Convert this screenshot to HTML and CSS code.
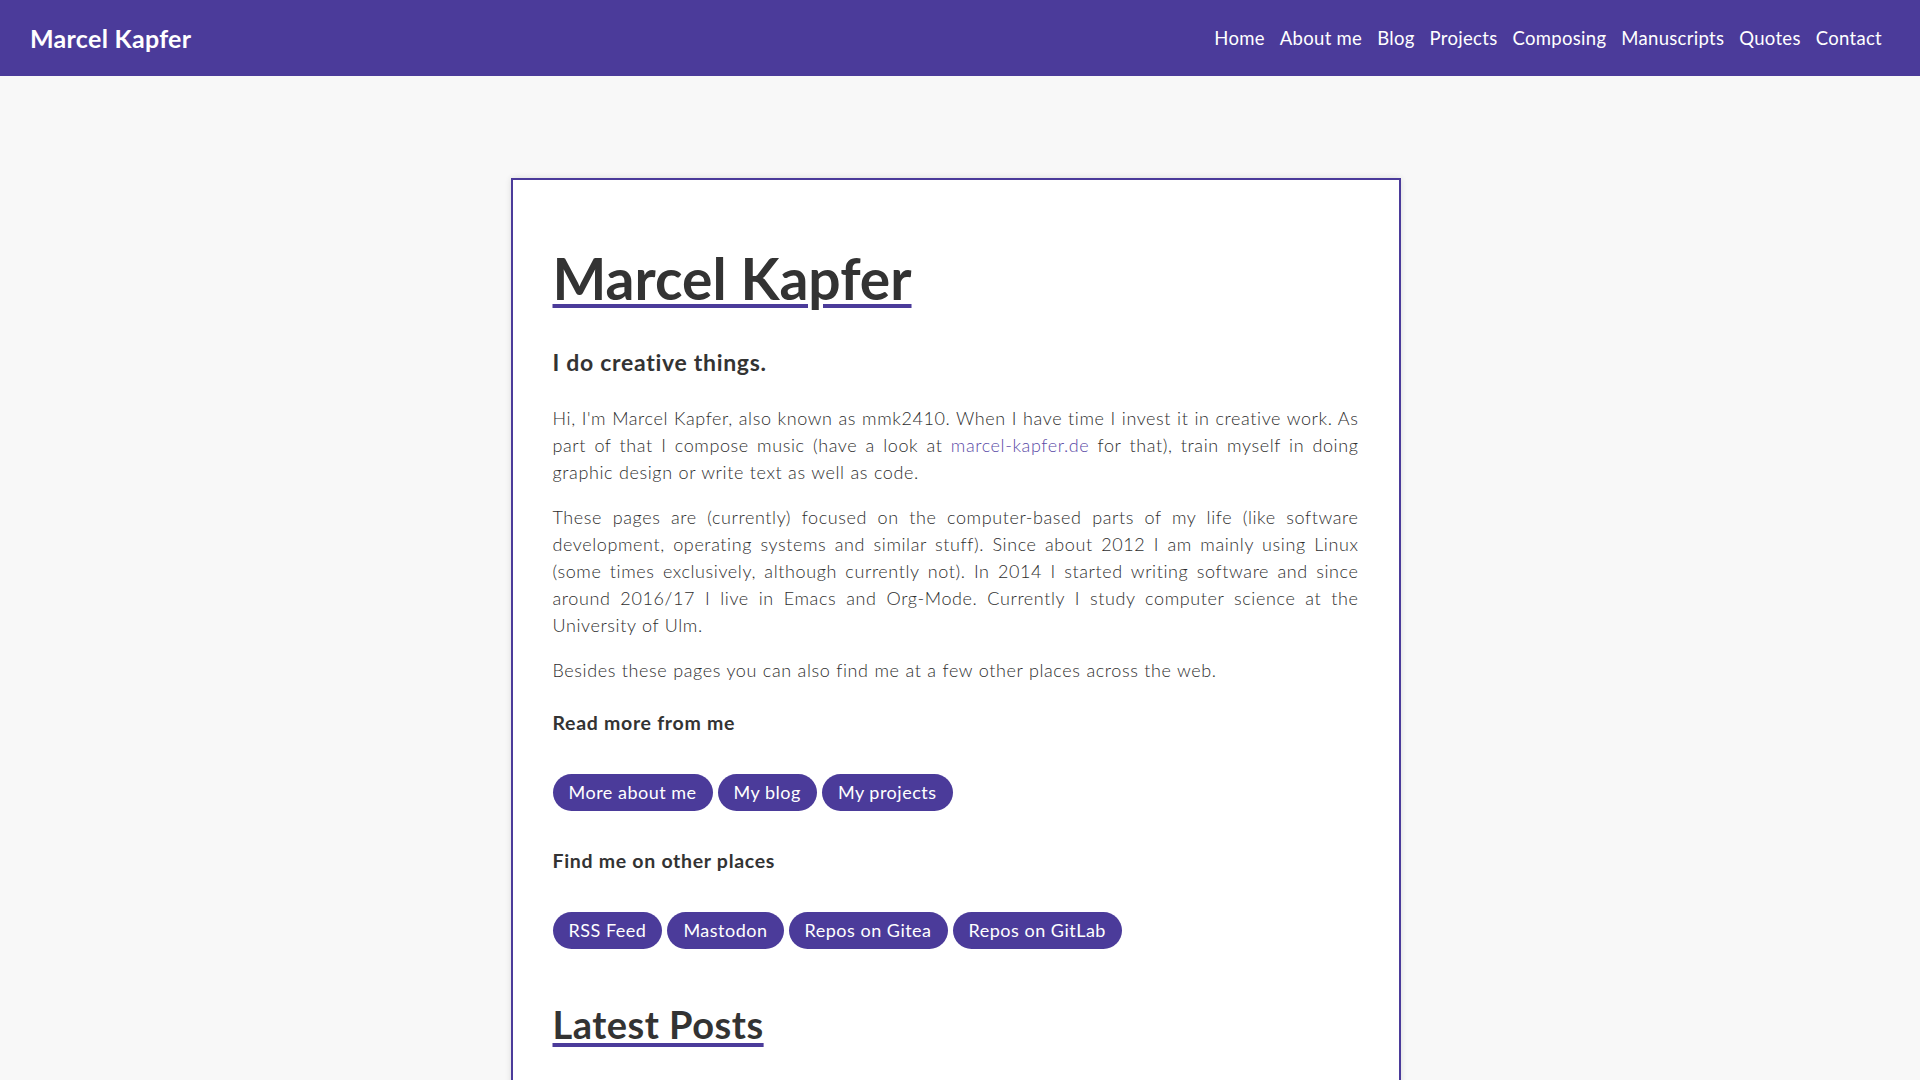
FILE: index.html
```html
<!DOCTYPE html>
<html lang="en">
<head>
<meta charset="utf-8">
<title>Marcel Kapfer</title>
<link rel="stylesheet" href="styles.css">
</head>
<body>
<header class="topbar">
  <a class="brand" href="#">Marcel Kapfer</a>
  <nav class="menu">
    <a href="#">Home</a>
    <a href="#">About me</a>
    <a href="#">Blog</a>
    <a href="#">Projects</a>
    <a href="#">Composing</a>
    <a href="#">Manuscripts</a>
    <a href="#">Quotes</a>
    <a href="#">Contact</a>
  </nav>
</header>
<main class="page">
  <article class="card">
    <h1 class="title"><a href="#">Marcel Kapfer</a></h1>
    <h2 class="subtitle">I do creative things.</h2>
    <p>Hi, I'm Marcel Kapfer, also known as mmk2410. When I have time I invest it in creative work. As part of that I compose music (have a look at <a class="link" href="#">marcel-kapfer.de</a> for that), train myself in doing graphic design or write text as well as code.</p>
    <p>These pages are (currently) focused on the computer-based parts of my life (like software development, operating systems and similar stuff). Since about 2012 I am mainly using Linux (some times exclusively, although currently not). In 2014 I started writing software and since around 2016/17 I live in Emacs and Org-Mode. Currently I study computer science at the University of Ulm.</p>
    <p>Besides these pages you can also find me at a few other places across the web.</p>
    <h3 class="section">Read more from me</h3>
    <div class="buttons">
      <a class="btn" href="#">More about me</a>
      <a class="btn" href="#">My blog</a>
      <a class="btn" href="#">My projects</a>
    </div>
    <h3 class="section">Find me on other places</h3>
    <div class="buttons">
      <a class="btn" href="#">RSS Feed</a>
      <a class="btn" href="#">Mastodon</a>
      <a class="btn" href="#">Repos on Gitea</a>
      <a class="btn" href="#">Repos on GitLab</a>
    </div>
    <h2 class="posts"><a href="#">Latest Posts</a></h2>
  </article>
</main>
</body>
</html>
```
FILE: styles.css
```css
html, body {
  margin: 0;
  padding: 0;
}
body {
  background: #f8f8f8;
  font-family: Lato, "Open Sans", sans-serif;
  color: #333;
}
a {
  text-decoration: none;
  color: inherit;
}
.topbar {
  height: 76px;
  background: #4b3b9a;
  display: flex;
  align-items: center;
  justify-content: space-between;
  padding: 0 38px 0 30px;
  box-sizing: border-box;
}
.brand {
  color: #fff;
  font-weight: 700;
  font-size: 25px;
  letter-spacing: 0.3px;
}
.menu {
  display: flex;
  gap: 0;
}
.menu a {
  color: #fff;
  font-size: 18.5px;
  font-weight: 400;
  letter-spacing: 0.3px;
  padding: 0 7.5px;
}
.menu a:last-child {
  padding-right: 0;
}
.page {
  padding: 102px 9px 0 0;
}
.card {
  width: 890px;
  box-sizing: border-box;
  margin: 0 auto;
  background: #fff;
  border: 2px solid #4b3b9a;
  border-bottom: none;
  box-shadow: 0 0 6px rgba(0, 0, 0, 0.12);
  padding: 60px 40px 40px 40px;
  min-height: 902px;
}
.title {
  margin: 0;
  font-size: 57px;
  font-weight: 700;
  line-height: 76px;
  color: #333;
}
.title a, .posts a {
  text-decoration: underline;
  text-decoration-color: #4b3b9a;
  text-decoration-thickness: 4px;
  text-underline-offset: 4px;
}
.subtitle {
  margin: 32px 0 29px;
  font-size: 23px;
  font-weight: 700;
  letter-spacing: 0.7px;
  color: #333;
}
p {
  margin: 0 0 18px;
  font-size: 18px;
  font-weight: 300;
  line-height: 27px;
  text-align: justify;
  color: #2e2e2e;
  letter-spacing: 0.6px;
  word-spacing: 0.4px;
}
.link {
  color: #5a4aa6;
}
.section {
  margin: 38px 0 40px;
  font-size: 19.5px;
  font-weight: 700;
  letter-spacing: 0.7px;
  color: #333;
}
p + .section {
  margin-top: 27px;
}
.buttons {
  display: flex;
  flex-wrap: wrap;
  gap: 5px;
}
.btn {
  display: inline-block;
  height: 37px;
  line-height: 37px;
  padding: 0 16px;
  border-radius: 19px;
  background: #4b3b9a;
  color: #fff;
  font-size: 18px;
  font-weight: 400;
  letter-spacing: 0.5px;
}
.posts {
  margin: 52px 0 0;
  font-size: 38px;
  font-weight: 700;
  letter-spacing: 0.5px;
  color: #333;
}
```
